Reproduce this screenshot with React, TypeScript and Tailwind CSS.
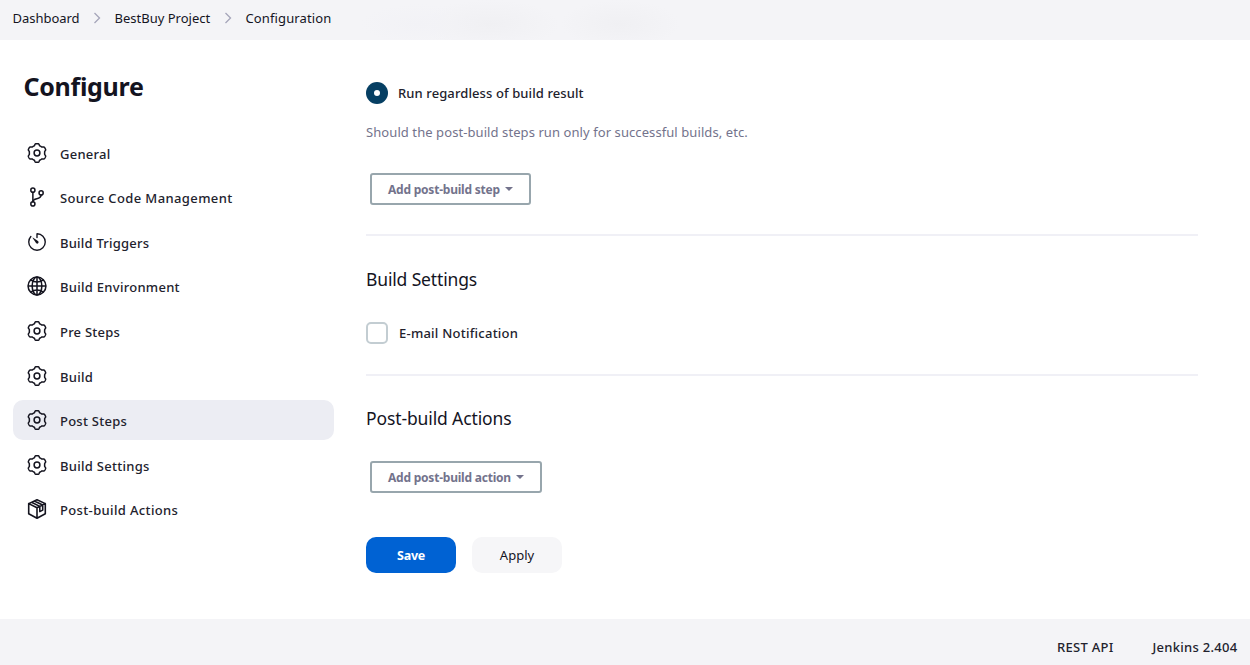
import { IoGitBranchOutline, IoTimerOutline, IoGlobeOutline } from "react-icons/io5";

const gearPath =
  Array.from({ length: 120 }, (_, i) => {
    const a = (i / 120) * Math.PI * 2;
    const r = 8.5 + 0.85 * Math.tanh(2.6 * Math.cos(6 * a));
    return `${i === 0 ? "M" : "L"}${(12 + r * Math.sin(a)).toFixed(2)} ${(12 - r * Math.cos(a)).toFixed(2)}`;
  }).join("") + "Z";

function GearIcon() {
  return (
    <svg viewBox="0 0 24 24" className="size-6" fill="none" stroke="currentColor" strokeWidth="1.5" strokeLinejoin="round">
      <path d={gearPath} />
      <circle cx="12" cy="12" r="2.9" />
    </svg>
  );
}

function PackageIcon() {
  return (
    <svg viewBox="0 0 24 24" className="size-6" fill="none" stroke="currentColor" strokeWidth="1.6" strokeLinejoin="round" strokeLinecap="round">
      <path d="M12 2.7 20.3 6.6v10.2L12 21.3 3.7 16.8V6.6ZM3.7 6.6 12 10.8l8.3-4.2M12 10.8v10.5M6.5 5.3l8.3 4.1v5.2l2.9-1.5V7.9L9.3 4" />
    </svg>
  );
}

const items = [
  { label: "General", icon: <GearIcon />, text: "tracking-[0.25px]" },
  { label: "Source Code Management", icon: <IoGitBranchOutline className="mx-px mb-[2px] size-[22px] [&_*]:[stroke-width:35px]" />, text: "tracking-[0.38px] mb-px" },
  { label: "Build Triggers", icon: <IoTimerOutline className="mx-px size-[22px]" />, text: "tracking-[0.22px]" },
  { label: "Build Environment", icon: <IoGlobeOutline className="mx-px mb-[2px] size-[22px] [&_*]:[stroke-width:36px]" />, text: "tracking-[0.28px] mb-px" },
  { label: "Pre Steps", icon: <GearIcon />, text: "tracking-[0.22px]" },
  { label: "Build", icon: <GearIcon />, text: "tracking-[0.25px]" },
  { label: "Post Steps", icon: <GearIcon />, active: true, text: "tracking-[0.25px]" },
  { label: "Build Settings", icon: <GearIcon />, text: "tracking-[0.28px]" },
  { label: "Post-build Actions", icon: <PackageIcon />, text: "tracking-[0.36px]" },
];

function Chevron() {
  return (
    <svg viewBox="0 0 8 12" className="h-3 w-2" fill="none" stroke="#a5a5ba" strokeWidth="1.3">
      <path d="m1.5 1 5 5-5 5" />
    </svg>
  );
}

function Caret() {
  return (
    <svg viewBox="0 0 8 4" className="mb-[2px] h-1 w-2" fill="currentColor">
      <path d="M0 0h8L4 4Z" />
    </svg>
  );
}

export default function App() {
  return (
    <div className="flex h-[665px] w-[1250px] flex-col overflow-hidden bg-white font-['Noto_Sans',sans-serif] text-[13px] font-normal text-[#14141f]">
      <header className="flex h-10 shrink-0 items-center bg-[#f4f4f7] bg-[radial-gradient(ellipse_60px_20px_at_420px_24px,#f2f2f6,#f2f2f600),radial-gradient(ellipse_70px_24px_at_490px_24px,#f0f0f3,#f0f0f300),radial-gradient(ellipse_60px_24px_at_620px_24px,#f0f0f3,#f0f0f300)] pb-1 pl-[12.5px] whitespace-nowrap">
        <a className="mt-[2px] w-[80px] tracking-[-0.03px]">Dashboard</a>
        <Chevron />
        <a className="mt-[2px] ml-[14px] w-[109px]">BestBuy Project</a>
        <Chevron />
        <a className="mt-[2px] ml-[14px] tracking-[0.12px]">Configuration</a>
      </header>
      <main className="flex h-[579px] shrink-0">
        <aside className="flex w-[334px] flex-col pl-[13px]">
          <h1 className="mt-[28px] ml-[10.5px] h-9 text-[25px] leading-9 font-bold tracking-[-0.3px]">Configure</h1>
          <nav className="mt-[29px] flex flex-col gap-[4.56px]">
            {items.map((item) => (
              <a key={item.label} className={`flex h-10 items-center rounded-[10px] pl-3 ${item.active ? "bg-[#ecedf3]" : ""}`}>
                {item.icon}
                <span className={`mt-[2px] ml-[11px] leading-5 font-medium whitespace-nowrap text-[#22222d] ${item.text}`}>{item.label}</span>
              </a>
            ))}
          </nav>
        </aside>
        <section className="ml-8 flex w-[832px] flex-col items-start">
          <label className="mt-[42px] flex h-[22px] items-center gap-[10px]">
            <span className="flex size-[22px] items-center justify-center rounded-full bg-[#063f63]">
              <span className="size-[6px] rounded-full bg-white" />
            </span>
            <span className="leading-5 font-medium tracking-[0.1px] text-[#22222d]">Run regardless of build result</span>
          </label>
          <p className="mt-[18px] h-5 leading-5 tracking-[0.08px] text-[#73738c]">Should the post-build steps run only for successful builds, etc.</p>
          <button className="mt-[31px] ml-1 flex h-8 w-[161px] items-center gap-[5px] rounded-[3px] border-2 border-[#98a6ad] pt-[2px] pl-4 text-[12px] font-bold tracking-[-0.22px] whitespace-nowrap text-[#73738c]">
            Add post-build step <Caret />
          </button>
          <hr className="mt-[29px] h-[2px] w-full border-0 bg-[#f0f0f6]" />
          <h2 className="mt-[29px] h-7 text-[17.5px] leading-7 tracking-[-0.15px]">Build Settings</h2>
          <label className="mt-[29px] flex h-[22px] items-center gap-[11px]">
            <span className="size-[22px] rounded-[5px] border-2 border-[#c3cdd2]" />
            <span className="leading-5 font-medium tracking-[0.24px] text-[#22222d]">E-mail Notification</span>
          </label>
          <hr className="mt-[30px] h-[2px] w-full border-0 bg-[#f0f0f6]" />
          <h2 className="mt-[28px] h-7 text-[17.5px] leading-7 tracking-[-0.12px]">Post-build Actions</h2>
          <button className="mt-[29px] ml-1 flex h-8 w-[172px] items-center gap-[5px] rounded-[3px] border-2 border-[#98a6ad] pt-[2px] pl-4 text-[12px] font-bold tracking-[-0.22px] whitespace-nowrap text-[#73738c]">
            Add post-build action <Caret />
          </button>
          <div className="mt-11 flex gap-4">
            <button className="h-9 w-[90px] rounded-[10px] bg-[#0062d3] pt-[2px] text-[12.5px] font-bold tracking-[-0.3px] text-white">Save</button>
            <button className="h-9 w-[90px] rounded-[10px] bg-[#f6f6f8] pt-[2px]">Apply</button>
          </div>
        </section>
      </main>
      <footer className="flex h-[46px] shrink-0 items-center justify-end gap-[39px] bg-[#f4f4f7] pt-[11px] pr-[12.5px] font-medium tracking-[0.28px] text-[#22222d]">
        <a>REST API</a>
        <a>Jenkins 2.404</a>
      </footer>
    </div>
  );
}
